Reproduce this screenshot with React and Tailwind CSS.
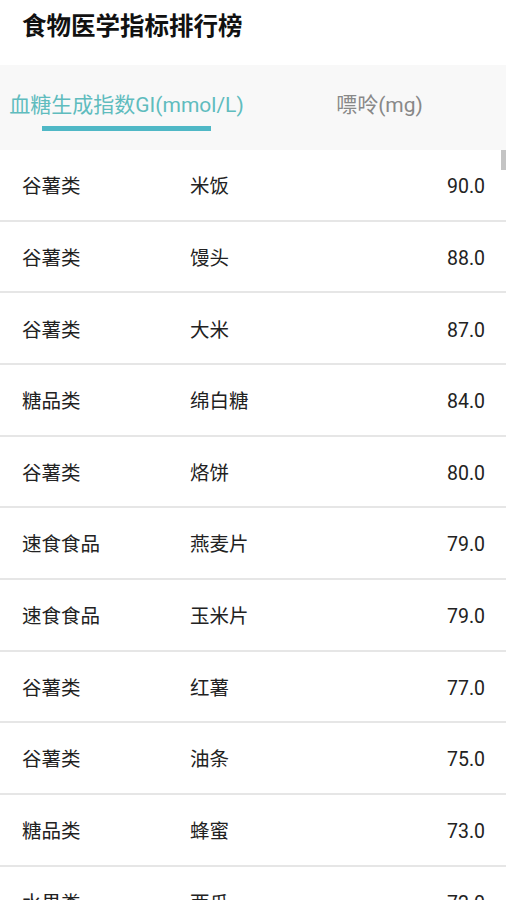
const rows = [
  ['谷薯类', '米饭', '90.0'],
  ['谷薯类', '馒头', '88.0'],
  ['谷薯类', '大米', '87.0'],
  ['糖品类', '绵白糖', '84.0'],
  ['谷薯类', '烙饼', '80.0'],
  ['速食食品', '燕麦片', '79.0'],
  ['速食食品', '玉米片', '79.0'],
  ['谷薯类', '红薯', '77.0'],
  ['谷薯类', '油条', '75.0'],
  ['糖品类', '蜂蜜', '73.0'],
  ['水果类', '西瓜', '72.0'],
]

export default function App() {
  return (
    <div
      className="relative h-[900px] w-[506px] overflow-hidden bg-white text-[#222]"
      style={{ fontFamily: "Roboto, 'Noto Sans CJK SC', sans-serif" }}
    >
      <header className="flex h-[65px] items-center px-[22px] pb-[10px]">
        <h1 className="text-[24.5px] font-bold text-[#111]">食物医学指标排行榜</h1>
      </header>

      <nav className="grid h-[85px] grid-cols-2 bg-[#f8f8f8]">
        <div className="flex flex-col items-center justify-center pt-[6px]">
          <span className="text-[21px] text-[#5fbcbe]">血糖生成指数GI(mmol/L)</span>
          <span className="mt-[4px] h-[5px] w-[169px] bg-[#4fb8c6]" />
        </div>
        <div className="flex flex-col items-center justify-center pt-[6px]">
          <span className="text-[21px] text-[#888]">嘌呤(mg)</span>
          <span className="mt-[4px] h-[5px] w-[169px]" />
        </div>
      </nav>

      <div className="absolute right-0 top-[150px] h-[20px] w-[5px] bg-[#c4c4c4]" />

      <ul>
        {rows.map(([category, name, value], i) => (
          <li
            key={i}
            className="flex h-[71.67px] items-center border-b-2 border-[#e6e6e6] pl-[22px] pr-[21px] pt-[4px] text-[19.5px]"
          >
            <span className="w-[168px]">{category}</span>
            <span className="flex-1">{name}</span>
            <span>{value}</span>
          </li>
        ))}
      </ul>
    </div>
  )
}
